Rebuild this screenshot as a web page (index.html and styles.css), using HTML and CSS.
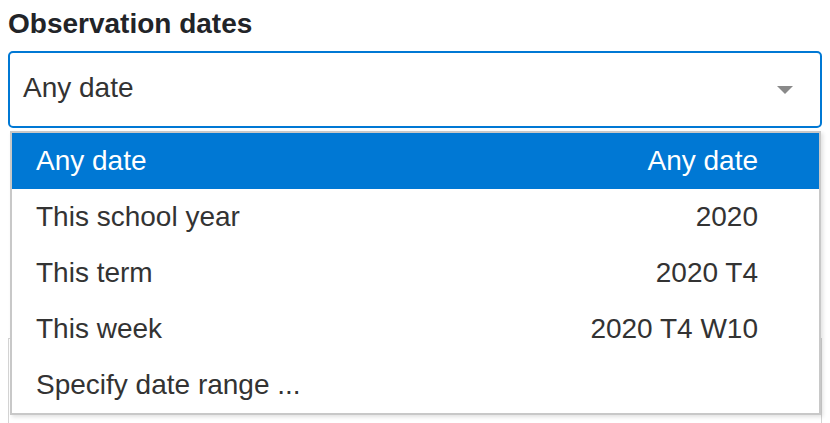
FILE: index.html
```html
<!DOCTYPE html>
<html lang="en">
<head>
<meta charset="utf-8">
<title>Observation dates</title>
<link rel="stylesheet" href="styles.css">
</head>
<body>
<div class="form">
  <div class="field">
    <label class="label">Observation dates</label>
    <div class="select">
      <span class="select-value">Any date</span>
      <span class="caret"></span>
    </div>
    <ul class="menu">
      <li class="option active"><span>Any date</span><span>Any date</span></li>
      <li class="option"><span>This school year</span><span>2020</span></li>
      <li class="option"><span>This term</span><span>2020 T4</span></li>
      <li class="option"><span>This week</span><span>2020 T4 W10</span></li>
      <li class="option"><span>Specify date range ...</span><span></span></li>
    </ul>
  </div>
  <div class="behind">
    <div class="panel"></div>
  </div>
</div>
</body>
</html>
```

FILE: styles.css
```css
html, body {
  margin: 0;
  padding: 0;
  background: #ffffff;
}
body {
  font-family: "Liberation Sans", Arial, sans-serif;
  font-size: 28px;
  color: #333333;
  height: 423px;
  overflow: hidden;
}
.form {
  padding: 8px 8px 0 8px;
  display: flex;
  flex-direction: column;
}
.field {
  position: relative;
  display: flex;
  flex-direction: column;
}
.label {
  font-weight: bold;
  color: #222428;
  line-height: 32px;
  margin-bottom: 11px;
}
.select {
  height: 77px;
  box-sizing: border-box;
  border: 2px solid #0078d4;
  border-radius: 5px;
  display: flex;
  align-items: center;
  justify-content: space-between;
  padding: 0 27px 0 13px;
}
.select-value {
  color: #333333;
  line-height: 32px;
  margin-top: -4px;
}
.caret {
  width: 0;
  height: 0;
  border-left: 8px solid transparent;
  border-right: 8px solid transparent;
  border-top: 8px solid #8a8a8a;
  margin-top: 0;
}
.menu {
  position: absolute;
  z-index: 5;
  top: 123px;
  left: 2px;
  width: 811px;
  box-sizing: border-box;
  margin: 0;
  padding: 0;
  list-style: none;
  background: #ffffff;
  border: 2px solid #c8c8c8;
  box-shadow: 2px 2px 4px rgba(0, 0, 0, 0.12);
}
.option {
  height: 56px;
  display: flex;
  align-items: center;
  justify-content: space-between;
  padding: 0 61px 0 24px;
  color: #333333;
}
.option.active {
  background: #0078d4;
  color: #ffffff;
}
.behind {
  display: flex;
  flex-direction: column;
  padding-top: 210px;
}
.panel {
  height: 85px;
  border: 1px solid #d4d4d4;
  border-bottom: none;
}
```
